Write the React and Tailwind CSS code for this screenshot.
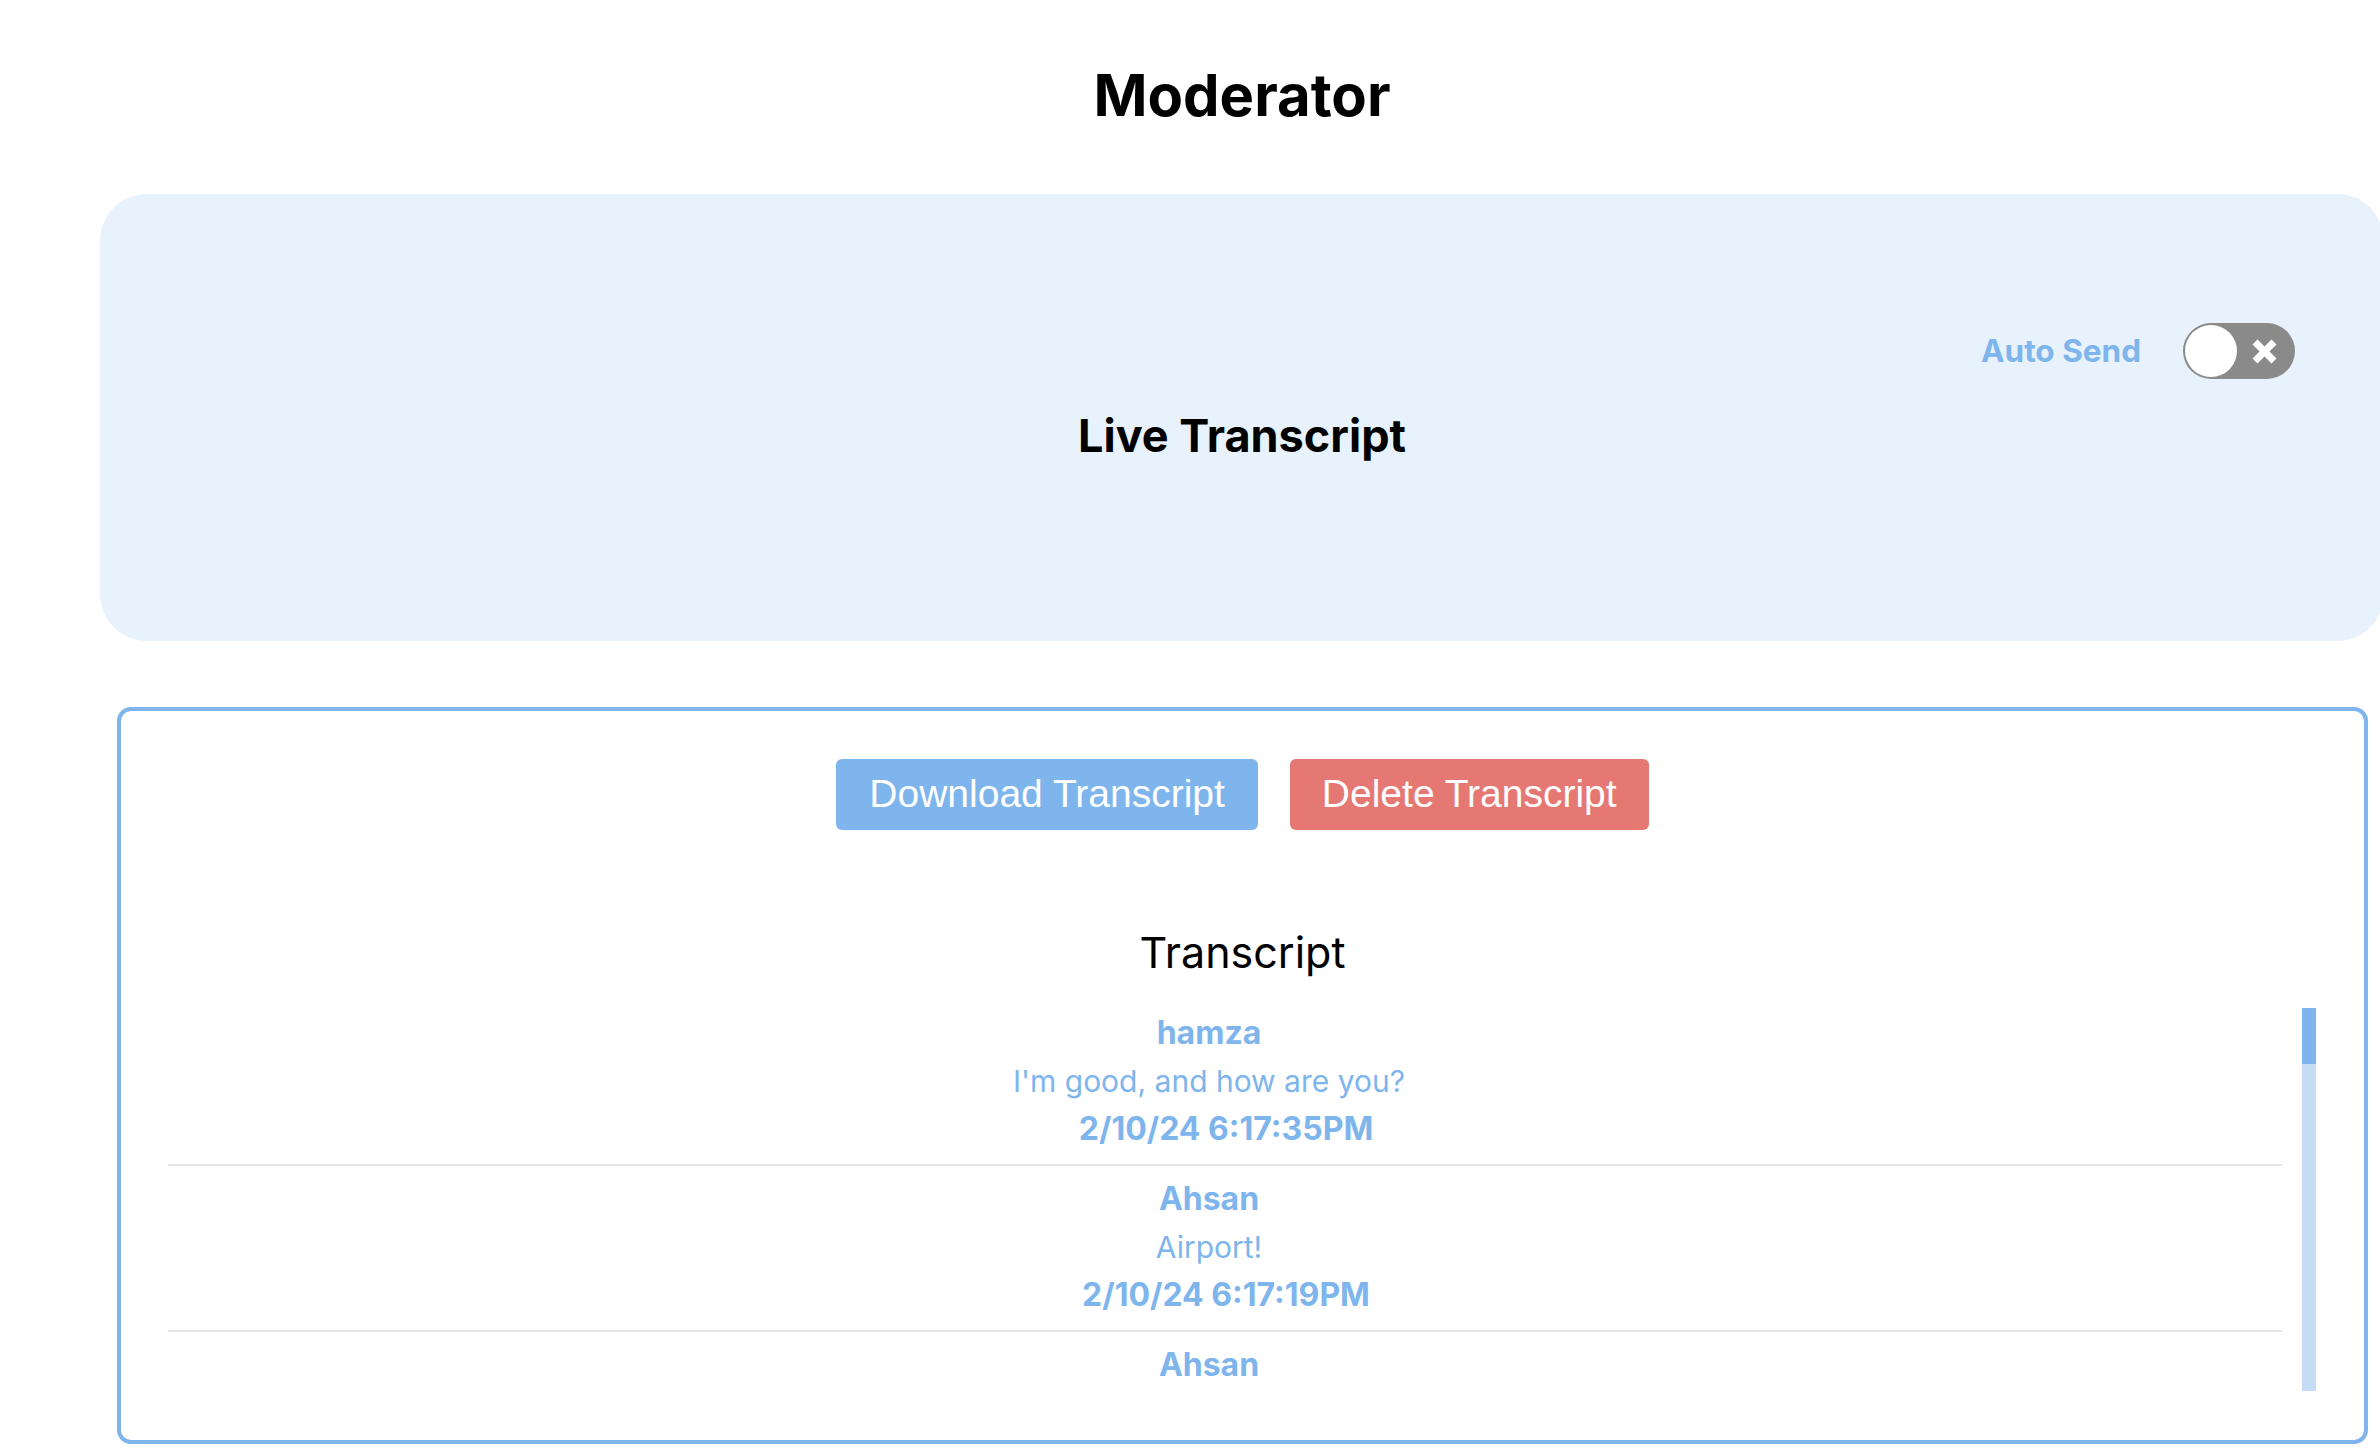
import React, { useState } from 'react';

const messages = [
  { id: 1, user: 'hamza', text: "I'm good, and how are you?", time: '2/10/24 6:17:35PM' },
  { id: 2, user: 'Ahsan', text: 'Airport!', time: '2/10/24 6:17:19PM' },
  { id: 3, user: 'Ahsan', text: 'Where are you going?', time: '2/10/24 6:17:02PM' },
];

const Toggle = ({ on, onChange }) => (
  <button
    onClick={() => onChange(!on)}
    className="relative w-[112px] h-[56px] rounded-full bg-[#8a8a8a] shrink-0"
  >
    <span className="absolute left-[2px] top-[2px] w-[52px] h-[52px] rounded-full bg-white" />
    <svg
      className="absolute left-[68px] top-[15px]"
      width="27"
      height="27"
      viewBox="0 0 27 27"
    >
      <path d="M4 4 L23 23 M23 4 L4 23" stroke="white" strokeWidth="7" strokeLinecap="butt" />
    </svg>
  </button>
);

const App = () => {
  const [autoSend, setAutoSend] = useState(false);

  return (
    <div className="w-[2380px] min-h-[1452px] overflow-hidden bg-white font-['Inter',sans-serif] text-black">
      <div className="ml-[100px] w-[2284px]">
        {/* Title */}
        <div className="h-[194px] pt-[66px]">
          <h1 className="text-center text-[58px] leading-[58px] font-bold">Moderator</h1>
        </div>

        {/* Live transcript panel */}
        <div className="h-[447px] rounded-[47px] bg-[#e8f2fc] pt-[129px]">
          <div className="flex items-center justify-end pr-[89px] gap-[42px]">
            <span className="text-[31.5px] leading-[40px] font-bold text-[#7eb5ec]">Auto Send</span>
            <Toggle on={autoSend} onChange={setAutoSend} />
          </div>
          <h2 className="mt-[29px] text-center text-[45px] leading-[56px] font-bold">Live Transcript</h2>
        </div>

        {/* Transcript box */}
        <div className="mt-[66px] ml-[17px] mr-[16px] border-4 border-[#7eb5ec] rounded-[14px] pt-[48px] pb-[49px]">
          <div className="flex justify-center gap-[32px]">
            <button className="h-[71px] px-[33px] rounded-[6px] bg-[#7eb5ec] text-white text-[39px] font-['Liberation_Sans',sans-serif]">
              Download Transcript
            </button>
            <button className="h-[71px] px-[32px] rounded-[6px] bg-[#e57873] text-white text-[39px] font-['Liberation_Sans',sans-serif]">
              Delete Transcript
            </button>
          </div>

          <h3 className="mt-[94px] text-center text-[43px] leading-[56px] font-normal">Transcript</h3>

          <div className="mt-[28px] flex pl-[47px] pr-[48px] gap-[20px]">
            <div className="flex-1 h-[383px] overflow-hidden">
              {messages.map((m) => (
                <div
                  key={m.id}
                  className="pt-[9px] first:pt-[1px] pb-[11px] border-b-2 border-[#e5e5ea] pr-[32px] text-center text-[#7eb5ec] text-[32px] leading-[48px]"
                >
                  <div className="font-bold">{m.user}</div>
                  <div className="text-[30px]">{m.text}</div>
                  <div className="font-bold pl-[34px]">{m.time}</div>
                </div>
              ))}
            </div>
            {/* scrollbar */}
            <div className="w-[14px] h-[383px] bg-[#c5dcf4]">
              <div className="h-[56px] bg-[#7eb5ec]" />
            </div>
          </div>
        </div>
      </div>
    </div>
  );
};

export default App;
